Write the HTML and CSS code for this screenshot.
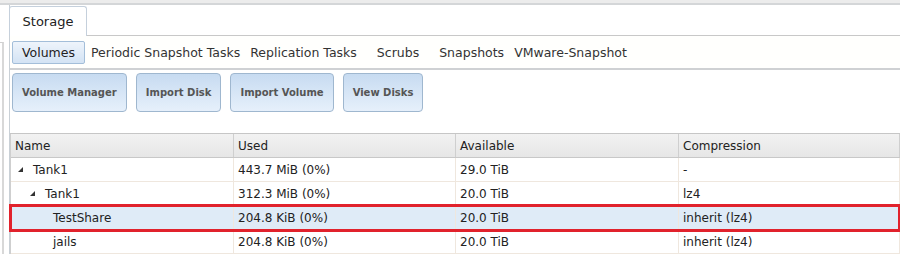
FILE: index.html
```html
<!DOCTYPE html>
<html lang="en">
  <head>
    <meta charset="UTF-8" />
    <title>Storage</title>
    <link rel="stylesheet" href="styles.css">
  </head>
  <body>
    <div class="topbar"></div>
    <div class="main">
      <div class="nav-edge"></div>
      <div class="panel">
        <div class="tab-strip">
          <div class="tab active">Storage</div>
        </div>
        <div class="subtabs">
          <span class="subtab selected">Volumes</span>
          <span class="subtab">Periodic Snapshot Tasks</span>
          <span class="subtab">Replication Tasks</span>
          <span class="subtab wide">Scrubs</span>
          <span class="subtab wide">Snapshots</span>
          <span class="subtab">VMware-Snapshot</span>
        </div>
        <div class="toolbar">
          <button class="tool-btn">Volume Manager</button>
          <button class="tool-btn">Import Disk</button>
          <button class="tool-btn">Import Volume</button>
          <button class="tool-btn">View Disks</button>
        </div>
        <div class="grid">
          <div class="grid-row header">
            <div class="cell">Name</div>
            <div class="cell">Used</div>
            <div class="cell">Available</div>
            <div class="cell">Compression</div>
          </div>
          <div class="grid-row">
            <div class="cell name level0"><span class="expander"></span>Tank1</div>
            <div class="cell">443.7 MiB (0%)</div>
            <div class="cell">29.0 TiB</div>
            <div class="cell">-</div>
          </div>
          <div class="grid-row">
            <div class="cell name level1"><span class="expander"></span>Tank1</div>
            <div class="cell">312.3 MiB (0%)</div>
            <div class="cell">20.0 TiB</div>
            <div class="cell">lz4</div>
          </div>
          <div class="grid-row selected">
            <div class="cell name leaf">TestShare</div>
            <div class="cell">204.8 KiB (0%)</div>
            <div class="cell">20.0 TiB</div>
            <div class="cell">inherit (lz4)</div>
          </div>
          <div class="grid-row">
            <div class="cell name leaf">jails</div>
            <div class="cell">204.8 KiB (0%)</div>
            <div class="cell">20.0 TiB</div>
            <div class="cell">inherit (lz4)</div>
          </div>
        </div>
      </div>
    </div>
  </body>
</html>
```

FILE: styles.css
```css
body {
  margin: 0;
  background-color: #ffffff;
  font-family: "DejaVu Sans", Verdana, sans-serif;
  font-size: 12px;
  color: #222222;
  overflow: hidden;
}

.topbar {
  height: 3px;
  background-color: #ececec;
  border-bottom: 2px solid #d4d6d8;
}

.main {
  display: flex;
}

.nav-edge {
  width: 2px;
  margin-top: 37px;
  border-top: 1px solid #d0d0d0;
  border-right: 2px solid #d8d8d8;
  margin-right: 5px;
}

.panel {
  flex: 1;
  border-left: 1px solid #c9d0d6;
}

.tab-strip {
  height: 29px;
  padding-top: 1px;
  border-bottom: 1px solid #c8c8c8;
  display: flex;
}

.tab {
  width: 78px;
  height: 30px;
  margin-left: -1px;
  margin-bottom: -1px;
  border: 1px solid #c5d0dc;
  border-bottom: none;
  border-radius: 3px 3px 0 0;
  background-color: #ffffff;
  display: flex;
  align-items: center;
  justify-content: center;
  font-size: 13px;
  color: #222222;
  box-sizing: border-box;
}

.subtabs {
  height: 32px;
  display: flex;
  align-items: center;
  padding-left: 2px;
  border-bottom: 2px solid #cfd1d3;
  background-color: #fffffd;
}

.subtab {
  font-size: 12.5px;
  color: #333333;
  padding: 0 5px;
  line-height: 21px;
}

.subtab.wide {
  margin-left: 10px;
}

.subtab.selected {
  padding: 0 9px;
  margin-right: 1px;
  border: 1px solid #a3bed9;
  border-radius: 2px;
  background: linear-gradient(#eef4fb, #d3e3f4);
  color: #222222;
}

.toolbar {
  height: 64px;
  display: flex;
  align-items: flex-start;
  padding: 3px 0 0 2px;
  box-sizing: border-box;
  border-bottom: 1px solid #c6c6c6;
}

.tool-btn {
  height: 39px;
  margin-right: 9px;
  padding: 0 9px;
  border: 1px solid #9fb7cf;
  border-radius: 4px;
  background: linear-gradient(#c7dbf1, #e6f0fb);
  font-family: "DejaVu Sans", Verdana, sans-serif;
  font-size: 10px;
  font-weight: bold;
  color: #555555;
  cursor: pointer;
}

.grid {
  border-left: 1px solid #cfcfcf;
}

.grid-row {
  display: grid;
  grid-template-columns: 223px 222px 223px 1fr;
  height: 24px;
  border-bottom: 1px solid #efe7de;
  box-sizing: border-box;
}

.grid-row.header {
  background: linear-gradient(#f2f2f2, #e6e6e6);
  border-bottom: 1px solid #c8c8c8;
  color: #222222;
}

.cell {
  display: flex;
  align-items: center;
  padding-left: 4px;
  border-right: 1px solid #efe7de;
  white-space: nowrap;
}

.header .cell {
  border-right-color: #cfcfcf;
}

.grid-row.selected {
  background-color: #dfebf7;
  border-top: 1px solid #b0c8e0;
  border-bottom: 1px solid #b0c8e0;
  outline: 3px solid #e1222c;
  outline-offset: -1px;
  margin-right: 1px;
}

.cell.level0 {
  padding-left: 7px;
}

.cell.level1 {
  padding-left: 19px;
}

.cell.leaf {
  padding-left: 42px;
}

.expander {
  width: 0;
  height: 0;
  border-left: 5px solid transparent;
  border-bottom: 5px solid #333333;
  margin-right: 10px;
}
```
